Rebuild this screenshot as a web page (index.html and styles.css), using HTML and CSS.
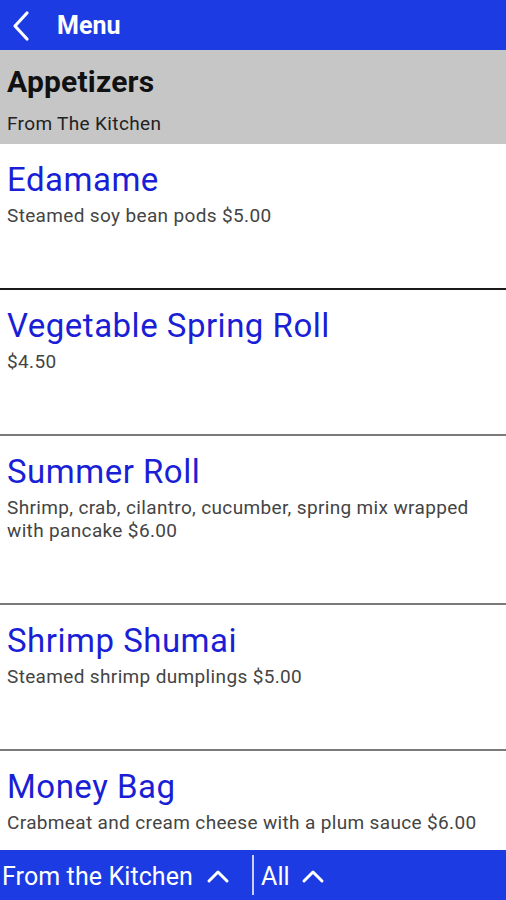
FILE: index.html
```html
<!DOCTYPE html>
<html>
<head>
<meta charset="utf-8">
<link rel="stylesheet" href="styles.css">
</head>
<body>
<div class="app">
  <header class="topbar">
    <svg class="back" width="22" height="32" viewBox="0 0 22 32"><path d="M17 3 L5 16 L17 29" fill="none" stroke="#fff" stroke-width="3.2" stroke-linecap="round" stroke-linejoin="round"/></svg>
    <span class="title">Menu</span>
  </header>
  <section class="cat">
    <div class="cat-title">Appetizers</div>
    <div class="cat-sub">From The Kitchen</div>
  </section>
  <main class="list">
    <div class="item first">
      <div class="name">Edamame</div>
      <div class="desc">Steamed soy bean pods $5.00</div>
    </div>
    <div class="item">
      <div class="name">Vegetable Spring Roll</div>
      <div class="desc">$4.50</div>
    </div>
    <div class="item">
      <div class="name">Summer Roll</div>
      <div class="desc">Shrimp, crab, cilantro, cucumber, spring mix wrapped with pancake $6.00</div>
    </div>
    <div class="item">
      <div class="name">Shrimp Shumai</div>
      <div class="desc">Steamed shrimp dumplings $5.00</div>
    </div>
    <div class="item">
      <div class="name">Money Bag</div>
      <div class="desc">Crabmeat and cream cheese with a plum sauce $6.00</div>
    </div>
  </main>
  <footer class="bottombar">
    <div class="tab tab-kitchen">
      <span>From the Kitchen</span>
      <svg class="up" width="24" height="16" viewBox="0 0 24 16"><path d="M3 13 L12 4 L21 13" fill="none" stroke="#fff" stroke-width="3" stroke-linecap="round" stroke-linejoin="round"/></svg>
    </div>
    <div class="sep"></div>
    <div class="tab tab-all">
      <span>All</span>
      <svg class="up" width="24" height="16" viewBox="0 0 24 16"><path d="M3 13 L12 4 L21 13" fill="none" stroke="#fff" stroke-width="3" stroke-linecap="round" stroke-linejoin="round"/></svg>
    </div>
  </footer>
</div>
</body>
</html>
```
FILE: styles.css
```css
* { box-sizing: border-box; }
html, body { margin: 0; padding: 0; }
body {
  width: 506px;
  height: 900px;
  overflow: hidden;
  font-family: Roboto, "Noto Sans", sans-serif;
  background: #fff;
}
.app {
  display: flex;
  flex-direction: column;
  height: 900px;
}
.topbar {
  height: 50px;
  background: #1c3be2;
  display: flex;
  align-items: center;
  padding-left: 10px;
  flex-shrink: 0;
}
.back { margin-right: 25px; margin-top: 1px; }
.topbar .title {
  color: #fff;
  font-weight: bold;
  font-size: 25px;
}
.cat {
  background: #c6c6c6;
  height: 94px;
  padding: 14px 7px 0;
  flex-shrink: 0;
}
.cat-title {
  font-weight: bold;
  font-size: 30px;
  letter-spacing: 0.2px;
  line-height: 36px;
  color: #111;
}
.cat-sub {
  font-size: 19px;
  letter-spacing: 0.35px;
  line-height: 24px;
  margin-top: 12px;
  color: #222;
}
.list {
  flex: 1;
  overflow: hidden;
}
.item {
  padding: 16px 7px 61px;
  border-bottom: 2px solid #7a7a7a;
}
.item.first { border-bottom-color: #1a1a1a; }
.name {
  color: #1a1fd6;
  font-size: 33px;
  letter-spacing: 0.5px;
  line-height: 40px;
}
.desc {
  color: #444;
  font-size: 19px;
  letter-spacing: 0.35px;
  line-height: 23px;
  margin-top: 4px;
  padding-right: 12px;
}
.bottombar {
  height: 50px;
  background: #1c3be2;
  display: flex;
  align-items: center;
  flex-shrink: 0;
  color: #fff;
  font-size: 25px;
  letter-spacing: 0.1px;
}
.tab {
  display: flex;
  align-items: center;
  padding-top: 3px;
}
.tab-kitchen { padding-left: 2px; width: 252px; }
.tab-kitchen .up { margin-left: 13px; margin-top: -2px; }
.tab-all { padding-left: 7px; }
.tab-all .up { margin-left: 11px; margin-top: -2px; }
.sep {
  width: 2px;
  height: 40px;
  background: #c8d0ff;
}
```
